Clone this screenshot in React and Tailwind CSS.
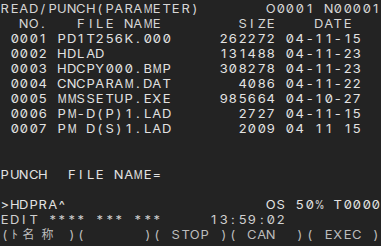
import React from 'react';

// 40 x 16 character screen, one cell = 9.525px wide
const isWide = (c) => /[\u3000-\u9fff]/.test(c);

const cellClass = (c) => {
  if (isWide(c)) return 'w-[19.05px] shrink-0 text-center';
  if (c === 'M' || c === 'W' || c === '%') return 'w-[9.525px] shrink-0 text-center scale-x-[0.82]';
  return 'w-[9.525px] shrink-0 text-center scale-x-[1.08]';
};

const Line = ({ text = '', className = '' }) => (
  <div className={`flex h-[15.1px] items-center whitespace-pre ${className}`}>
    {[...text].map((c, i) => (
      <span key={i} className={cellClass(c)}>
        {c}
      </span>
    ))}
  </div>
);

const files = [
  ['0001', 'PD1T256K.000', '262272', '04-11-15'],
  ['0002', 'HDLAD', '131488', '04-11-23'],
  ['0003', 'HDCPY000.BMP', '308278', '04-11-23'],
  ['0004', 'CNCPARAM.DAT', '4086', '04-11-22'],
  ['0005', 'MMSSETUP.EXE', '985664', '04-10-27'],
  ['0006', 'PM-D(P)1.LAD', '2727', '04-11-15'],
  ['0007', 'PM D(S)1.LAD', '2009', '04 11 15'],
];

const row = ([no, name, size, date]) =>
  ' ' + no + ' ' + name.padEnd(12) + size.padStart(11) + ' ' + date;

export default function App() {
  return (
    <div className="w-[381px] h-[246px] overflow-hidden bg-[#232323] pt-[1px] text-[12px] leading-none slashed-zero text-[#e2e2e2] font-['Inter','Noto_Sans_CJK_SC',sans-serif]">
      <Line text="READ/PUNCH(PARAMETER)       O0001 N00001" className="text-[#d6d6d6]" />
      <Line text="  NO.   FILE NAME        SIZE    DATE" className="text-[#d6d6d6]" />
      {files.map((f) => (
        <Line key={f[0]} text={row(f)} />
      ))}
      <Line />
      <Line />
      <Line text="PUNCH  FILE NAME=" />
      <Line />
      <Line text=">HDPRA^                     OS 50% T0000" />
      <Line text="EDIT **** *** ***     13:59:02" className="text-[#cfcfcf]" />
      <Line text="(ﾄ名称 )(      )( STOP )( CAN  )( EXEC )" className="text-[#bdbdbd]" />
    </div>
  );
}
